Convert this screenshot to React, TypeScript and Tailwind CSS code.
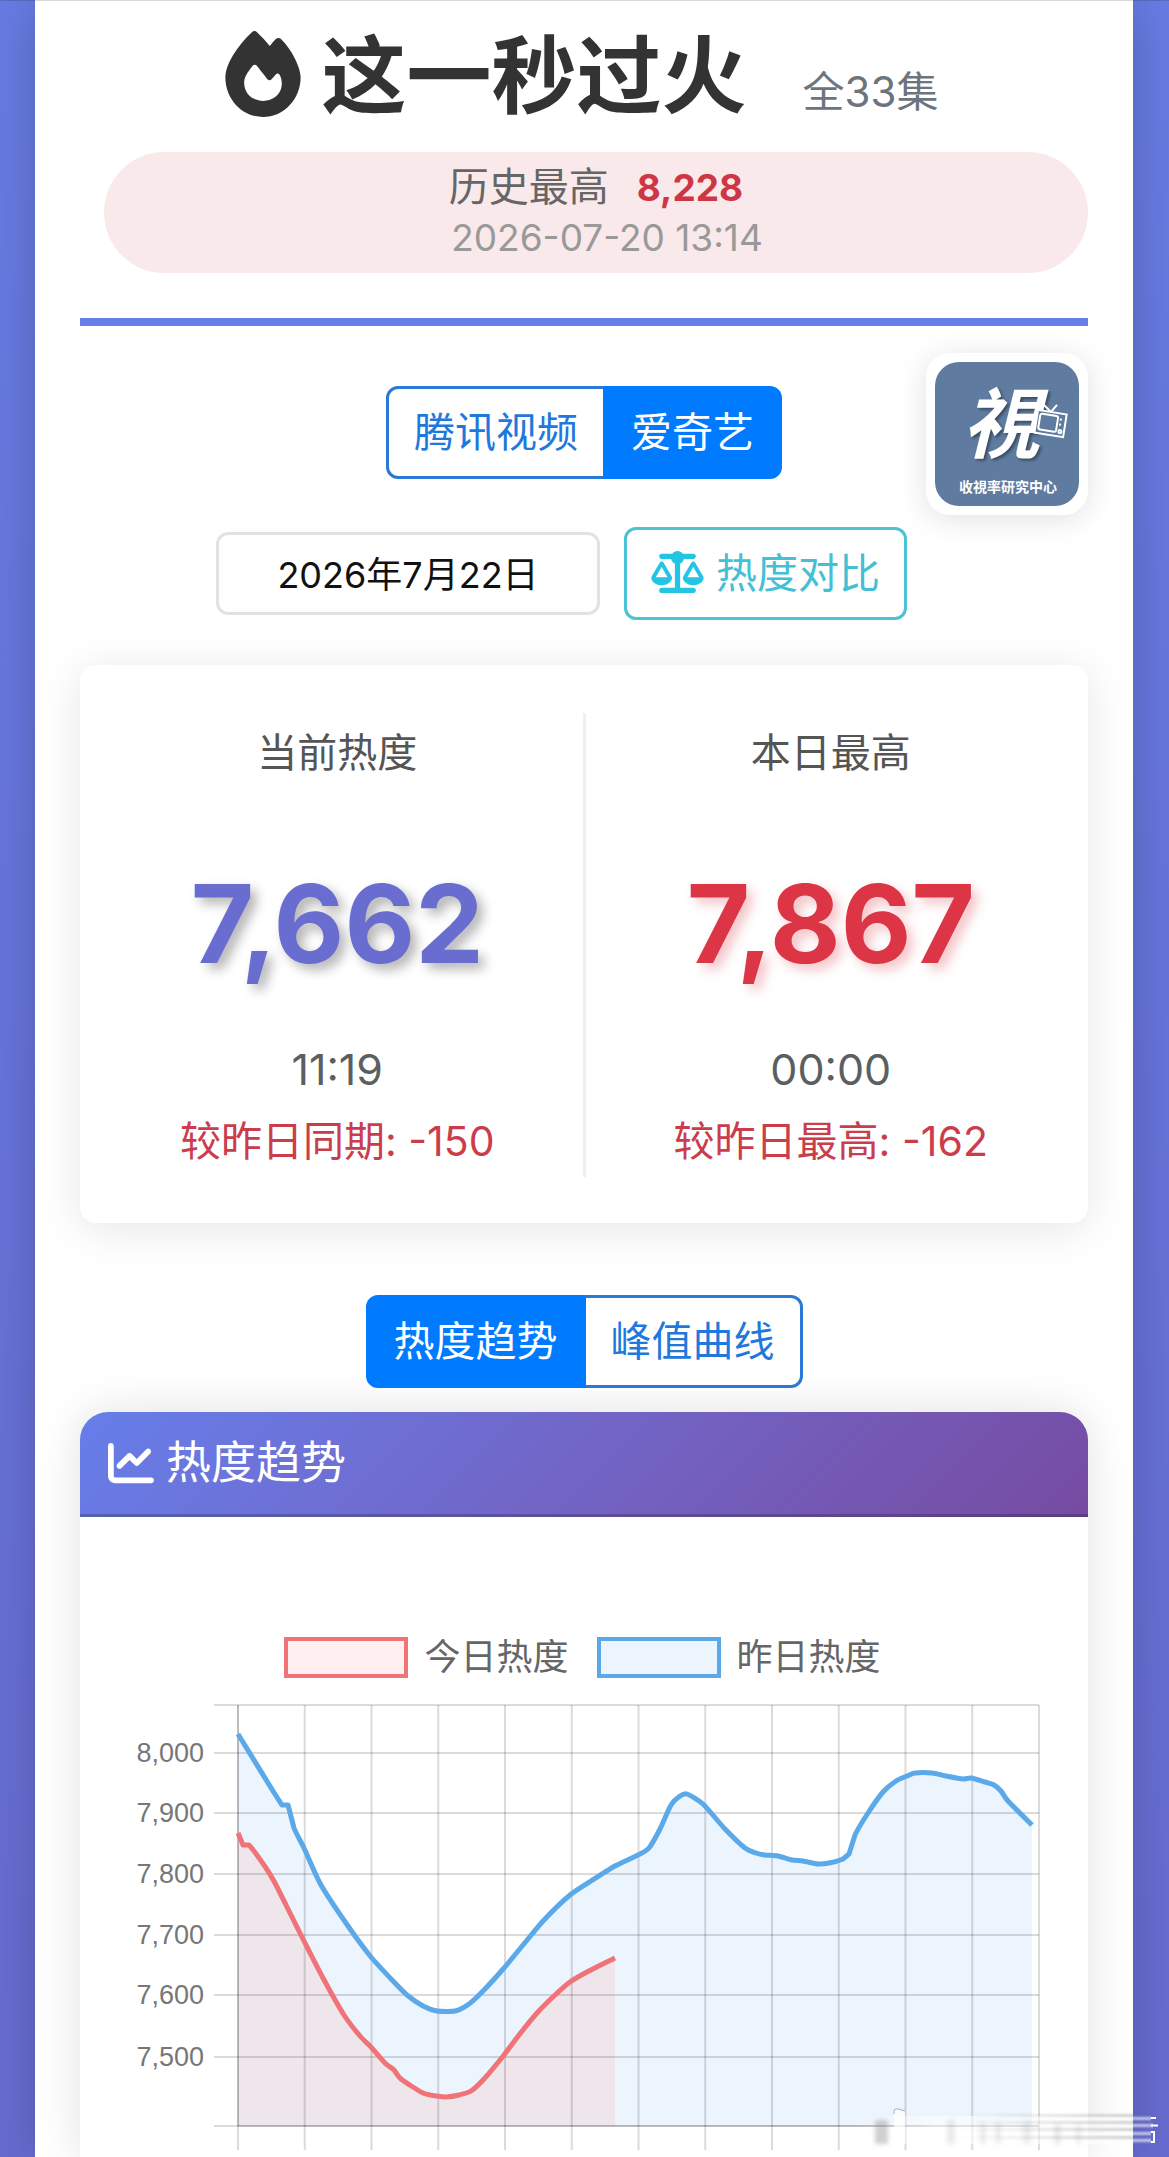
import { useState } from "react"
import { FaChartLine, FaFire, FaScaleBalanced } from "react-icons/fa6"

type Point = [number, number]

const yesterday: Point[] = [
  [158, 45], [202, 116], [208, 116], [214, 139], [224, 159], [241, 196], [268, 237], [291, 268],
  [314, 293], [327, 306], [343, 317], [357, 322], [375, 322], [389, 315], [404, 301], [424, 279],
  [443, 256], [464, 231], [490, 206], [511, 192], [535, 177], [558, 166], [569, 159], [580, 140],
  [591, 116], [600, 107], [607, 105], [623, 115], [645, 140], [665, 159], [676, 164], [685, 166],
  [698, 167], [712, 171], [723, 172], [738, 175], [749, 174], [763, 170], [769, 165], [775, 146],
  [788, 124], [803, 103], [816, 92], [827, 87], [835, 84], [852, 84], [866, 87], [883, 90],
  [891, 89], [905, 93], [914, 96], [921, 102], [928, 112], [952, 136],
]

const today: Point[] = [
  [158, 144], [163, 156], [169, 156], [186, 179], [195, 194], [211, 226], [224, 252], [243, 289],
  [264, 326], [280, 347], [291, 358], [305, 374], [314, 381], [321, 390], [343, 404], [357, 407],
  [366, 408], [379, 406], [391, 402], [404, 390], [424, 366], [439, 346], [457, 324], [475, 306],
  [490, 293], [507, 283], [535, 269],
]

const yTicks = [
  { label: "8,000", y: 64 },
  { label: "7,900", y: 124 },
  { label: "7,800", y: 185 },
  { label: "7,700", y: 246 },
  { label: "7,600", y: 306 },
  { label: "7,500", y: 368 },
]

const LEFT = 158
const RIGHT = 959
const TOP = 16
const BOTTOM = 437
const TENSION = 0.12

// Smooth curve through the points, short steps stay straight
const toLine = (points: Point[]) =>
  points
    .map(([x, y], i) => {
      if (i === 0) return `M${x} ${y}`
      const [px, py] = points[i - 1]
      if (x - px < 7) return `L${x} ${y}`
      const [ax, ay] = points[i - 2] ?? points[i - 1]
      const [bx, by] = points[i + 1] ?? points[i]
      const c1 = `${px + (x - ax) * TENSION} ${py + (y - ay) * TENSION}`
      const c2 = `${x - (bx - px) * TENSION} ${y - (by - py) * TENSION}`
      return `C${c1} ${c2} ${x} ${y}`
    })
    .join("")

const toArea = (points: Point[]) =>
  `${toLine(points)}V${BOTTOM}H${points[0][0]}Z`

function TrendChart() {
  const columns = Array.from({ length: 13 }, (_, i) => LEFT + ((RIGHT - LEFT) / 12) * i)
  return (
    <svg viewBox="0 0 1008 468" className="block w-full h-auto" role="img" aria-label="热度趋势">
      <path d={toArea(yesterday)} fill="#ecf4fe" />
      <path d={toArea(today)} fill="#efe6ec" />
      <g stroke="#000" strokeOpacity="0.14" strokeWidth="2">
        {columns.map((x) => (
          <line key={x} x1={x} x2={x} y1={TOP} y2="461" />
        ))}
        <line x1="134" x2={RIGHT} y1={TOP} y2={TOP} />
        {yTicks.map((tick) => (
          <line key={tick.label} x1="134" x2={RIGHT} y1={tick.y} y2={tick.y} />
        ))}
        <line x1="134" x2={RIGHT} y1={BOTTOM} y2={BOTTOM} />
        <line x1={LEFT} x2={LEFT} y1={TOP} y2={BOTTOM} />
        <line x1={LEFT} x2={RIGHT} y1={BOTTOM} y2={BOTTOM} />
      </g>
      <g fill="none" strokeWidth="5" strokeLinejoin="round">
        <path d={toLine(yesterday)} stroke="#5ba9e8" />
        <path d={toLine(today)} stroke="#f07378" />
      </g>
      <g className="font-['Liberation_Sans',sans-serif] text-[27px]" fill="#777" textAnchor="end">
        {yTicks.map((tick) => (
          <text key={tick.label} x="124" y={tick.y + 9}>
            {tick.label}
          </text>
        ))}
      </g>
    </svg>
  )
}

function Logo() {
  return (
    <svg viewBox="0 0 144 144" className="block size-36 rounded-3xl" role="img" aria-label="收視率研究中心">
      <rect width="144" height="144" fill="#5f7b9f" />
      <g className="font-['Noto_Sans_CJK_TC',sans-serif] font-bold" fill="#fff" textAnchor="middle">
        <text x="66" y="90" className="text-[77px] italic [text-shadow:2px_2px_3px_#0006]">
          視
        </text>
        <text x="73" y="130" className="text-[14px]">
          收視率研究中心
        </text>
      </g>
      {/* television */}
      <g transform="rotate(9 115 62)" stroke="#fff" strokeWidth="2" fill="none">
        <rect x="101" y="50" width="29" height="23" fill="#5f7b9f" />
        <rect x="104" y="53" width="18" height="16" rx="2" />
        <path d="M114 50 106 44M114 50 119 42M125 55v2M125 60v2" />
        <circle cx="126" cy="68" r="1.5" />
      </g>
    </svg>
  )
}

function Tabs({ items, initial }: { items: string[]; initial: number }) {
  const [active, setActive] = useState(initial)
  return (
    <div className="flex justify-center">
      {items.map((item, i) => (
        <button
          key={item}
          type="button"
          aria-pressed={i === active}
          onClick={() => setActive(i)}
          className={`h-[93px] border-[3px] px-[25px] text-[41px] first:rounded-l-xl last:rounded-r-xl not-first:-ml-[3px] ${
            i === active ? "z-1 border-[#007bff] bg-[#007bff] text-white" : "border-[#2b79d6] bg-white text-[#1f78dc]"
          }`}
        >
          {item}
        </button>
      ))}
    </div>
  )
}

type StatProps = { title: string; value: string; time: string; diff: string; valueClass: string }

function Stat({ title, value, time, diff, valueClass }: StatProps) {
  return (
    <div className="flex flex-1 flex-col items-center pt-3">
      <div className="text-[40px] leading-[56px] text-[#555]">{title}</div>
      <div className={`mt-[52px] mb-5 text-[109px] leading-[180px] font-bold ${valueClass}`}>{value}</div>
      <div className="text-[43px] leading-[72px] text-[#5c5f61]">{time}</div>
      <div className="text-[41px] leading-[72px] text-[#cc3d4c]">{diff}</div>
    </div>
  )
}

function LegendItem({ label, swatch }: { label: string; swatch: string }) {
  return (
    <div className="flex items-center gap-4">
      <span className={`h-[41px] w-[124px] border-4 ${swatch}`} />
      <span className="text-[36px] leading-[41px] text-[#666]">{label}</span>
    </div>
  )
}

// Faded corner stamp in the lower right of the page
function CornerStamp() {
  return (
    <svg viewBox="0 0 329 67" className="pointer-events-none absolute right-0 bottom-0 h-[67px] w-[329px]" aria-hidden="true">
      <defs>
        <linearGradient id="veil" x1="0" x2="1">
          <stop offset="0" stopColor="#fff" stopOpacity="0" />
          <stop offset="0.3" stopColor="#fff" stopOpacity="0.6" />
          <stop offset="1" stopColor="#fff" stopOpacity="0.5" />
        </linearGradient>
        <linearGradient id="shade" x1="0" x2="1">
          <stop offset="0" stopColor="#777" stopOpacity="0" />
          <stop offset="1" stopColor="#777" stopOpacity="0.35" />
        </linearGradient>
        <filter id="soft" x="-20%" y="-20%" width="140%" height="140%">
          <feGaussianBlur stdDeviation="2" />
        </filter>
        <filter id="streak-soft" x="-5%" y="-20%" width="110%" height="140%">
          <feGaussianBlur stdDeviation="0 1" />
        </filter>
      </defs>
      <rect x="12" y="26" width="281" height="28" fill="url(#veil)" />
      <g fill="#777" filter="url(#soft)">
        <rect x="35" y="30" width="13" height="24" opacity="0.35" />
        <rect x="107" y="30" width="8" height="24" opacity="0.15" />
        <rect x="140" y="32" width="6" height="22" opacity="0.12" />
        <rect x="155" y="32" width="6" height="22" opacity="0.12" />
        <rect x="183" y="32" width="8" height="22" opacity="0.12" />
        <rect x="214" y="34" width="7" height="20" opacity="0.15" />
        <rect x="236" y="34" width="5" height="20" opacity="0.12" />
      </g>
      <g fill="url(#shade)" filter="url(#streak-soft)">
        <rect x="120" y="24" width="173" height="3" />
        <rect x="120" y="31" width="173" height="3" />
        <rect x="120" y="38" width="173" height="3" />
        <rect x="120" y="46" width="173" height="3" />
      </g>
      <g fill="#fff" fillOpacity="0.65" filter="url(#streak-soft)">
        <rect x="293" y="27" width="18" height="3" />
        <rect x="293" y="34" width="20" height="3" />
        <rect x="293" y="42" width="18" height="3" />
        <rect x="293" y="49" width="18" height="3" />
      </g>
      <path d="M54 54V21q0-3 4-2l7 2V54Z" fill="#fff" fillOpacity="0.7" />
      <path d="M54 24V21q0-3 4-2l7 2" fill="none" stroke="#9fb0c4" strokeWidth="1" />
      <path d="M311 28h5M311 35.500h7M311 42h3V52h-3" fill="none" stroke="#fff" strokeWidth="2" />
    </svg>
  )
}

export default function App() {
  const [date, setDate] = useState("2026年7月22日")
  return (
    <div className="relative overflow-hidden bg-linear-to-b from-[#667ce3] to-[#676bd0] pr-9 pl-[35px] font-[Inter,'Noto_Sans_CJK_SC',sans-serif] before:absolute before:inset-x-0 before:top-0 before:z-10 before:h-px before:bg-black/15">
      <main className="relative bg-white px-[45px] shadow-[0_0_45px_rgba(0,0,0,0.2)]">
        <header className="border-b-8 border-[#667eea] pb-[45px]">
          <h1 className="flex h-[152px] items-baseline justify-center pt-[15px] pr-[10px] font-bold text-[#333]">
            <FaFire className="mr-4 translate-y-[10px] self-baseline text-[86px]" />
            <span className="text-[85px] leading-[124px]">这一秒过火</span>
            <span className="ml-14 text-[42px] font-normal text-[#6c757d]">全33集</span>
          </h1>
          <div className="ml-6 rounded-full bg-[#fae9ea] py-[10px] text-center">
            <div className="text-[40px] leading-[50px] text-[#666]">
              历史最高
              <span className="ml-7 text-[37px] font-bold text-[#cf3645]">8,228</span>
            </div>
            <div className="pl-[22px] text-[37px] leading-[50px] text-[#999]">2026-07-20 13:14</div>
          </div>
        </header>

        <div className="absolute top-[353px] right-[45px] rounded-3xl bg-white p-[9px] shadow-[0_4px_30px_rgba(0,0,0,0.12)]">
          <Logo />
        </div>

        <div className="mt-[60px]">
          <Tabs items={["腾讯视频", "爱奇艺"]} initial={1} />
        </div>

        <div className="mt-12 flex items-center justify-center gap-6 pr-[45px]">
          <input
            type="text"
            aria-label="日期"
            value={date}
            onChange={(e) => setDate(e.target.value)}
            className="h-[83px] w-[384px] rounded-xl border-[3px] border-[#e2e2e2] bg-white pb-1 text-center text-[36px] text-[#111]"
          />
          <button
            type="button"
            className="flex h-[93px] items-center gap-3 rounded-xl border-[3px] border-[#4cc2d2] bg-white px-6 text-[41px] text-[#43c0d3]"
          >
            <FaScaleBalanced className="mb-1 h-[42px] w-[53px] text-[#22c6e3]" />
            热度对比
          </button>
        </div>

        <section className="mt-[45px] flex rounded-2xl bg-white px-3 pt-12 pb-[46px] shadow-[0_6px_45px_rgba(0,0,0,0.1)]">
          <Stat
            title="当前热度"
            value="7,662"
            time="11:19"
            diff="较昨日同期: -150"
            valueClass="text-[#6a6dd0] [text-shadow:6px_6px_12px_rgba(0,0,0,0.3)]"
          />
          <div className="w-[3px] bg-[#efefef]" />
          <Stat
            title="本日最高"
            value="7,867"
            time="00:00"
            diff="较昨日最高: -162"
            valueClass="text-[#dc3545] [text-shadow:6px_6px_12px_rgba(220,53,69,0.3)]"
          />
        </section>

        <div className="mt-[72px]">
          <Tabs items={["热度趋势", "峰值曲线"]} initial={0} />
        </div>

        <section className="mt-6 rounded-t-[28px] bg-white shadow-[0_0_45px_rgba(0,0,0,0.12)]">
          <h2 className="flex h-[105px] items-center gap-3 rounded-t-[28px] border-b-[3px] border-black/20 bg-linear-135 from-[#667eea] to-[#764ba2] bg-origin-border px-7 text-[45px] text-white">
            <FaChartLine className="text-[46px]" />
            热度趋势
          </h2>
          <div className="flex justify-center gap-7 pt-[120px] pr-[3px] pb-[11px]">
            <LegendItem label="今日热度" swatch="border-[#f07378] bg-[#ffeff0]" />
            <LegendItem label="昨日热度" swatch="border-[#5ba9e8] bg-[#ecf4fe]" />
          </div>
          <TrendChart />
        </section>
      </main>
      <CornerStamp />
    </div>
  )
}
